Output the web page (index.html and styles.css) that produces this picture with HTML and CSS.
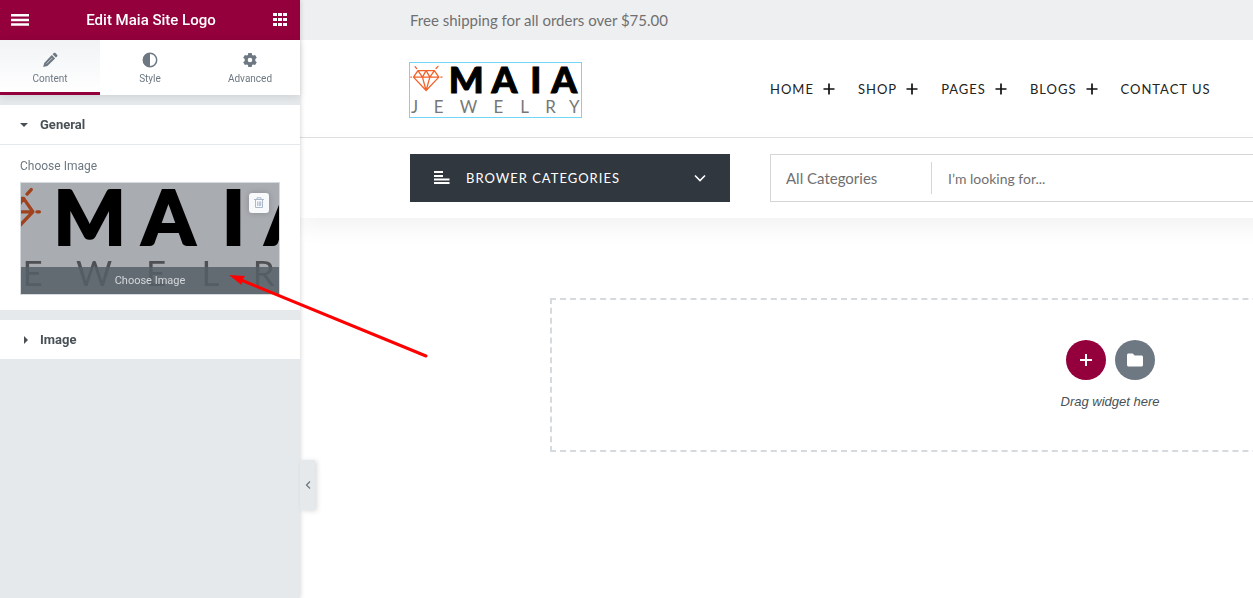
FILE: index.html
```
<!DOCTYPE html>
<html lang="en">
<head>
<meta charset="utf-8">
<title>Edit Maia Site Logo</title>
<link rel="stylesheet" href="styles.css">
</head>
<body>
<div class="editor">
  <aside class="panel">
    <header class="panel-header">
      <button class="icon-button" type="button" aria-label="Menu">
        <svg width="18" height="14" viewBox="0 0 18 14"><path d="M0 1h18v2.500H0zM0 5.700h18v2.500H0zM0 10.300h18v2.500H0z" fill="#fff"/></svg>
      </button>
      <h1 class="panel-title">Edit Maia Site Logo</h1>
      <button class="icon-button" type="button" aria-label="Widgets">
        <svg width="14" height="14" viewBox="0 0 14 14" fill="#fff"><path d="M0 0h4v3H0zM5 0h4v3H5zM10 0h4v3h-4zM0 5h4v3H0zM5 5h4v3H5zM10 5h4v3h-4zM0 10h4v3H0zM5 10h4v3H5zM10 10h4v3h-4z"/></svg>
      </button>
    </header>
    <nav class="tabs">
      <button class="tab tab-active" type="button">
        <svg width="16" height="16" viewBox="0 0 16 16" fill="#6d7882"><path d="M9.800 3.100l3.300 3.300-7.700 7.700-4.200 1 1-4.200zM10.600 2.300l1.200-1.200c.5-.5 1.100-.5 1.600 0l1.700 1.700c.5.5.5 1.100 0 1.600l-1.200 1.200z"/><path d="M4.600 11.600L10.300 5.900" stroke="#f8f9fa" stroke-width=".6"/></svg>
        Content
      </button>
      <button class="tab" type="button">
        <svg width="16" height="16" viewBox="0 0 16 16"><circle cx="8" cy="8" r="6.700" fill="none" stroke="#6d7882" stroke-width="1.500"/><path d="M8 1a7 7 0 0 0 0 14z" fill="#6d7882"/></svg>
        Style
      </button>
      <button class="tab" type="button">
        <svg width="16" height="16" viewBox="0 0 16 16" fill="#6d7882"><path fill-rule="evenodd" d="M6.300 1h3.400l.4 2 1.100.6 1.900-.7 1.700 2.900-1.500 1.300v1.800l1.500 1.300-1.700 2.900-1.900-.7-1.100.6-.4 2H6.300l-.4-2-1.100-.6-1.900.7-1.700-2.900 1.500-1.300V7.100L1.200 5.800l1.700-2.900 1.900.7L5.900 3zM8 5.700a2.300 2.300 0 1 0 0 4.600 2.300 2.300 0 0 0 0-4.600z"/></svg>
        Advanced
      </button>
    </nav>
    <section class="section">
      <button class="section-toggle section-open" type="button" aria-expanded="true">
        <svg width="8" height="8" viewBox="0 0 8 8"><path d="M0 2h8L4 6z" fill="#495157"/></svg>
        General
      </button>
      <div class="section-body">
        <p class="control-label">Choose Image</p>
        <div class="media">
          <svg class="media-image" viewBox="0 0 172 54" preserveAspectRatio="xMidYMid slice">
            <g fill="none" stroke="#f2622a" stroke-width="1.600" stroke-linejoin="round" stroke-linecap="round"><path d="M8 7.500h16.500l4.500 6.500L16.200 27.500 3.500 14zM3.500 14H29M8 7.500l4.500 6.500 3.700 13.500L20 14l4.500-6.500M12.500 14l3.700-6.500L20 14M.8 14h.7M31 14h1.200M5.200 3.500l1.500 2M28.200 3.200l-2 2.200"/></g>
            <text class="logo-name" x="39 82 121 142" y="30">MAIA</text>
            <text class="logo-sub" x="1 24 50 84 111 136 160" y="50">JEWELRY</text>
          </svg>
          <button class="media-delete" type="button" aria-label="Delete image">
            <svg width="10" height="12" viewBox="0 0 10 12" fill="none" stroke="#a9b9ca"><path d="M0 2.500h10M3 2V.8h4V2M1.500 3v7.500h7V3M3.700 4.500v4.500M5.300 4.500v4.500M6.700 4.500v4.500"/></svg>
          </button>
          <button class="media-choose" type="button">Choose Image</button>
        </div>
      </div>
    </section>
    <section class="section">
      <button class="section-toggle" type="button" aria-expanded="false">
        <svg width="8" height="8" viewBox="0 0 8 8"><path d="M4 0v8l4-4z" fill="#495157"/></svg>
        Image
      </button>
    </section>
    <button class="panel-collapse" type="button" aria-label="Hide panel">
      <svg width="6" height="8" viewBox="0 0 6 8"><path d="M5 .5L1.500 4 5 7.500" fill="none" stroke="#6d7882" stroke-width="1.300"/></svg>
    </button>
  </aside>

  <main class="preview">
    <div class="site">
      <div class="topbar"><p class="container">Free shipping for all orders over $75.00</p></div>
      <header class="site-header">
        <div class="container header-row">
          <a class="logo" href="#" aria-label="Maia Jewelry">
            <svg width="171" height="54" viewBox="0 0 172 54">
              <g fill="none" stroke="#f2622a" stroke-width="1.300" stroke-linejoin="round" stroke-linecap="round"><path d="M8 7.500h16.500l4.500 6.500L16.200 27.500 3.500 14zM3.500 14H29M8 7.500l4.500 6.500 3.700 13.500L20 14l4.500-6.500M12.500 14l3.700-6.500L20 14M.8 14h.7M31 14h1.200M5.200 3.500l1.500 2M28.200 3.200l-2 2.200"/></g>
              <text class="logo-name" x="39 82 121 142" y="30">MAIA</text>
              <text class="logo-sub" x="1 24 50 84 111 136 160" y="50">JEWELRY</text>
            </svg>
          </a>
          <nav class="menu">
            <a href="#">HOME <svg width="12" height="12" viewBox="0 0 12 12"><path d="M6 .5v11M.5 6h11" stroke="#111" stroke-width="1.700"/></svg></a>
            <a href="#">SHOP <svg width="12" height="12" viewBox="0 0 12 12"><path d="M6 .5v11M.5 6h11" stroke="#111" stroke-width="1.700"/></svg></a>
            <a href="#">PAGES <svg width="12" height="12" viewBox="0 0 12 12"><path d="M6 .5v11M.5 6h11" stroke="#111" stroke-width="1.700"/></svg></a>
            <a href="#">BLOGS <svg width="12" height="12" viewBox="0 0 12 12"><path d="M6 .5v11M.5 6h11" stroke="#111" stroke-width="1.700"/></svg></a>
            <a href="#">CONTACT US</a>
          </nav>
        </div>
      </header>
      <div class="toolbar">
        <div class="container toolbar-row">
          <button class="browse" type="button">
            <svg width="16" height="14" viewBox="0 0 16 14" fill="#fff"><path d="M0 0h9v2H0zM0 4h9v2H0zM0 7.500h15.500v2H0zM0 11h15.500v2H0z"/></svg>
            <span class="browse-label">BROWER CATEGORIES</span>
            <svg width="12" height="8" viewBox="0 0 12 8"><path d="M1 1.500l5 5 5-5" fill="none" stroke="#fff" stroke-width="1.600"/></svg>
          </button>
          <form class="search">
            <select class="search-category" aria-label="Category"><option>All Categories</option></select>
            <input class="search-input" type="text" placeholder="I’m looking for..." aria-label="Search">
          </form>
        </div>
      </div>
      <div class="dropzone">
        <div class="dropzone-actions">
          <button class="round round-add" type="button" aria-label="Add section">
            <svg width="14" height="14" viewBox="0 0 14 14"><path d="M7 1v12M1 7h12" stroke="#fff" stroke-width="2"/></svg>
          </button>
          <button class="round round-folder" type="button" aria-label="Add template">
            <svg width="16" height="14" viewBox="0 0 16 14"><path d="M1.500.5h4.200l2 2h6.800c.8 0 1.500.7 1.500 1.500v8c0 .8-.7 1.500-1.500 1.500h-13C.7 13.500 0 12.800 0 12V2C0 1.200.7.500 1.500.5z" fill="#fff"/></svg>
          </button>
        </div>
        <p class="dropzone-hint">Drag widget here</p>
      </div>
    </div>
  </main>
  <svg class="pointer" width="200" height="86" viewBox="0 0 200 86"><path d="M12 6L197 82" stroke="#f00" stroke-width="3" stroke-linecap="round"/><path d="M0 1l16 1-3 4.500L12.500 11z" fill="#f00"/></svg>
</div>
</body>
</html>
```
FILE: styles.css
```
* { box-sizing: border-box; }
body { margin: 0; font-family: Roboto, sans-serif; background: #fff; }
h1, p { margin: 0; font-weight: 400; }
button { border: 0; padding: 0; margin: 0; background: none; font: inherit; color: inherit; cursor: pointer; }
svg { display: block; flex: none; }

.editor { position: relative; display: flex; min-height: 100vh; overflow: hidden; }

.panel { position: relative; z-index: 2; flex: 0 0 300px; background: #e6e9ec; box-shadow: 0 0 5px rgba(0, 0, 0, .2); }
.panel-header { display: flex; align-items: center; justify-content: space-between; height: 40px; padding: 0 13px 0 11px; background: #93003c; color: #fff; }
.icon-button { display: flex; }
.panel-title { font-size: 15px; font-weight: 500; line-height: 20px; }

.tabs { display: flex; height: 55px; background: #fff; box-shadow: 0 2px 8px rgba(0, 0, 0, .1); }
.tab { flex: 1; display: flex; flex-direction: column; align-items: center; gap: 4px; padding-top: 12px; border-bottom: 3px solid transparent; font-size: 10px; line-height: 13px; color: #6d7882; }
.tab-active { border-bottom-color: #93003c; background: linear-gradient(#f1f3f5, #fff); }

.section { margin-top: 10px; background: #fff; }
.section-toggle { display: flex; align-items: center; gap: 12px; width: 100%; height: 39px; padding: 0 20px; font-size: 13px; font-weight: 700; color: #495157; }
.section-open { height: 40px; border-bottom: 1px solid #e6e9ec; }
.section-body { padding: 12px 20px 15px; }
.control-label { margin-bottom: 7px; font-size: 12px; line-height: 18px; color: #6d7882; }
.media { position: relative; height: 113px; border: 1px solid #d5dadf; background: #fff; overflow: hidden; }
.media::after { content: ""; position: absolute; inset: 0; background: #a9acb1; mix-blend-mode: multiply; }
.media-image { width: 100%; height: 100%; }
.media-choose { position: absolute; z-index: 1; left: 0; right: 0; bottom: 0; height: 27px; background: rgba(86, 95, 103, .85); font-size: 11px; color: #d5d8dc; }
.media-delete { position: absolute; z-index: 1; top: 10px; right: 10px; display: flex; align-items: center; justify-content: center; width: 20px; height: 20px; border-radius: 3px; background: #f8f9fa; box-shadow: 0 0 6px rgba(0, 0, 0, .2); }
.panel-collapse { position: absolute; top: 460px; left: 100%; display: flex; align-items: center; justify-content: center; width: 15px; height: 50px; background: #e6e9ec; box-shadow: 2px 1px 5px rgba(0, 0, 0, .15); }

.preview { flex: 1; min-width: 0; overflow: hidden; }
.site { min-width: 1620px; font-family: Lato, sans-serif; }
.container { width: 1400px; margin: 0 auto; }
.topbar { background: #eeeff1; font-size: 15px; line-height: 40px; color: #707070; }
.site-header { border-bottom: 1px solid #e0e0e0; }
.header-row { display: flex; align-items: center; height: 97px; }
.logo { margin-left: -1px; margin-top: 2px; border: 1px solid #71d7f7; }
.logo-name { font-family: Lato, sans-serif; font-weight: 900; font-size: 37px; fill: #000; stroke: #000; stroke-width: 1px; }
.logo-sub { font-family: Lato, sans-serif; font-weight: 400; font-size: 17px; fill: #777; }
.menu { display: flex; gap: 23px; margin-left: 188px; font-size: 13px; line-height: 20px; letter-spacing: 1px; }
.menu a { display: flex; align-items: center; gap: 9px; color: #222; text-decoration: none; }
.toolbar { padding: 16px 0; box-shadow: 0 10px 20px rgba(0, 0, 0, .05); }
.toolbar-row { display: flex; gap: 40px; }
.browse { display: flex; align-items: center; width: 320px; height: 48px; padding: 0 24px; background: #30373f; color: #fff; font-size: 13px; letter-spacing: 1px; }
.browse-label { flex: 1; margin-left: 16px; text-align: left; }
.search { flex: 1; display: flex; align-items: center; height: 48px; border: 1px solid #d5d5d5; }
.search-category { appearance: none; width: 161px; height: 32px; padding: 0 15px; border: 0; border-right: 1px solid #d5d5d5; background: #fff; font: 15px Lato, sans-serif; color: #707070; }
.search-input { flex: 1; height: 32px; padding: 0 16px; border: 0; font: 14px Lato, sans-serif; color: #707070; }
.search-input::placeholder { color: #707070; opacity: 1; }

.dropzone { width: 1120px; margin: 80px auto 0; padding: 40px 0 38px; border: 2px dashed #d5dadf; text-align: center; }
.dropzone-actions { display: flex; justify-content: center; gap: 9px; }
.round { display: flex; align-items: center; justify-content: center; width: 40px; height: 40px; border-radius: 50%; }
.round-add { background: #93003c; }
.round-folder { background: #6d7882; }
.dropzone-hint { margin-top: 12px; font: italic 13px/20px "Liberation Sans", sans-serif; color: #495157; }

.pointer { position: absolute; z-index: 3; left: 229px; top: 274px; pointer-events: none; }
```
